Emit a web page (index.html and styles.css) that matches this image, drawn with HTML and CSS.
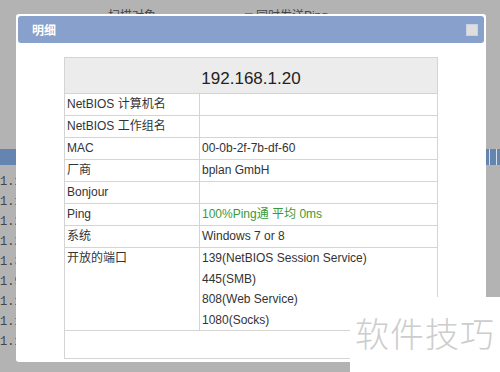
FILE: index.html
```html
<!DOCTYPE html>
<html>
<head>
    <title>明细</title>
    <link rel="stylesheet" href="styles.css">
</head>
<body>
    <div class="page">
        <div class="toolbar">
            <span class="tool-label">扫描对象</span>
            <span class="tool-check">□ 同时发送Ping</span>
        </div>
        <div class="grid-head">
            <span class="col-sep"></span>
        </div>
        <ul class="ip-list">
            <li>1.1.</li>
            <li>1.1.</li>
            <li>1.2</li>
            <li>1.2</li>
            <li>1.3</li>
            <li>1.9</li>
            <li>1.1</li>
            <li>1.1</li>
            <li>1.1</li>
        </ul>
    </div>

    <div class="dialog">
        <div class="dialog-title">
            <span>明细</span>
            <span class="close-box"></span>
        </div>
        <div class="dialog-body">
            <table class="detail">
                <tr>
                    <th colspan="2">192.168.1.20</th>
                </tr>
                <tr>
                    <td class="key">NetBIOS 计算机名</td>
                    <td></td>
                </tr>
                <tr>
                    <td class="key">NetBIOS 工作组名</td>
                    <td></td>
                </tr>
                <tr>
                    <td class="key">MAC</td>
                    <td>00-0b-2f-7b-df-60</td>
                </tr>
                <tr>
                    <td class="key">厂商</td>
                    <td>bplan GmbH</td>
                </tr>
                <tr>
                    <td class="key">Bonjour</td>
                    <td></td>
                </tr>
                <tr>
                    <td class="key">Ping</td>
                    <td class="ok">100%Ping通 平均 0ms</td>
                </tr>
                <tr>
                    <td class="key">系统</td>
                    <td>Windows 7 or 8</td>
                </tr>
                <tr class="ports">
                    <td class="key">开放的端口</td>
                    <td>
                        <div>139(NetBIOS Session Service)</div>
                        <div>445(SMB)</div>
                        <div>808(Web Service)</div>
                        <div>1080(Socks)</div>
                    </td>
                </tr>
                <tr class="blank">
                    <td colspan="2"></td>
                </tr>
            </table>
        </div>
    </div>

    <div class="watermark">软件技巧</div>
</body>
</html>
```

FILE: styles.css
```css
body {
    margin: 0;
    background-color: #b3b3b3;
    font-family: Arial, "Liberation Sans", "Noto Sans CJK SC", sans-serif;
    font-size: 12px;
    color: #333;
    width: 500px;
    height: 372px;
    overflow: hidden;
    position: relative;
}

.toolbar {
    height: 149px;
    padding: 9px 0 0 108px;
    box-sizing: border-box;
    color: #444;
    line-height: 14px;
}

.tool-check {
    margin-left: 86px;
}

.grid-head {
    height: 16px;
    background-color: #6585b0;
    display: flex;
    justify-content: flex-end;
}

.col-sep {
    width: 6px;
    margin-right: 3px;
    border-left: 1px solid #d8e0ea;
    border-right: 1px solid #d8e0ea;
}

.ip-list {
    list-style: none;
    margin: 7px 0 0;
    padding: 0;
    font-family: "Liberation Mono", monospace;
    color: #444;
}

.ip-list li {
    height: 20px;
    line-height: 20px;
    width: 16px;
    overflow: hidden;
    white-space: nowrap;
}

.dialog {
    position: absolute;
    left: 16px;
    top: 14px;
    width: 470px;
    height: 348px;
    background-color: #fff;
    border-radius: 3px;
    box-sizing: border-box;
    padding: 2px;
}

.dialog-title {
    height: 27px;
    background-color: #87a0cc;
    border-radius: 3px;
    display: flex;
    align-items: center;
    justify-content: space-between;
    padding: 0 6px 0 14px;
    color: #fff;
    font-weight: bold;
}

.close-box {
    width: 10px;
    height: 10px;
    background-color: #dedede;
    border: 1px solid #c9d2e4;
}

.dialog-body {
    padding: 14px 0 0 46px;
}

.detail {
    width: 374px;
    border-collapse: collapse;
}

.detail th {
    height: 36px;
    box-sizing: border-box;
    background-color: #ececec;
    font-weight: normal;
    font-size: 17px;
    line-height: 20px;
    color: #222;
    padding: 7px 0 0;
    border: 1px solid #d4d4d4;
}

.detail td {
    height: 21px;
    line-height: 21px;
    padding: 0 2px;
    border: 1px solid #d4d4d4;
    vertical-align: middle;
    white-space: nowrap;
}

.detail td.key {
    width: 130px;
}

.detail td.ok {
    color: #3a9a3a;
}

.ports td {
    height: 82px;
    vertical-align: top;
    padding-top: 0;
}

.ports td div {
    line-height: 20.5px;
}

.blank td {
    height: 27px;
}

.watermark {
    position: absolute;
    left: 350px;
    top: 297px;
    width: 150px;
    height: 75px;
    background-color: #fff;
    color: #cdcdcd;
    font-family: "Noto Sans CJK SC", sans-serif;
    font-weight: 300;
    font-size: 34px;
    line-height: 34px;
    padding: 19px 0 0 5px;
    box-sizing: border-box;
    white-space: nowrap;
    letter-spacing: 1px;
}
```
